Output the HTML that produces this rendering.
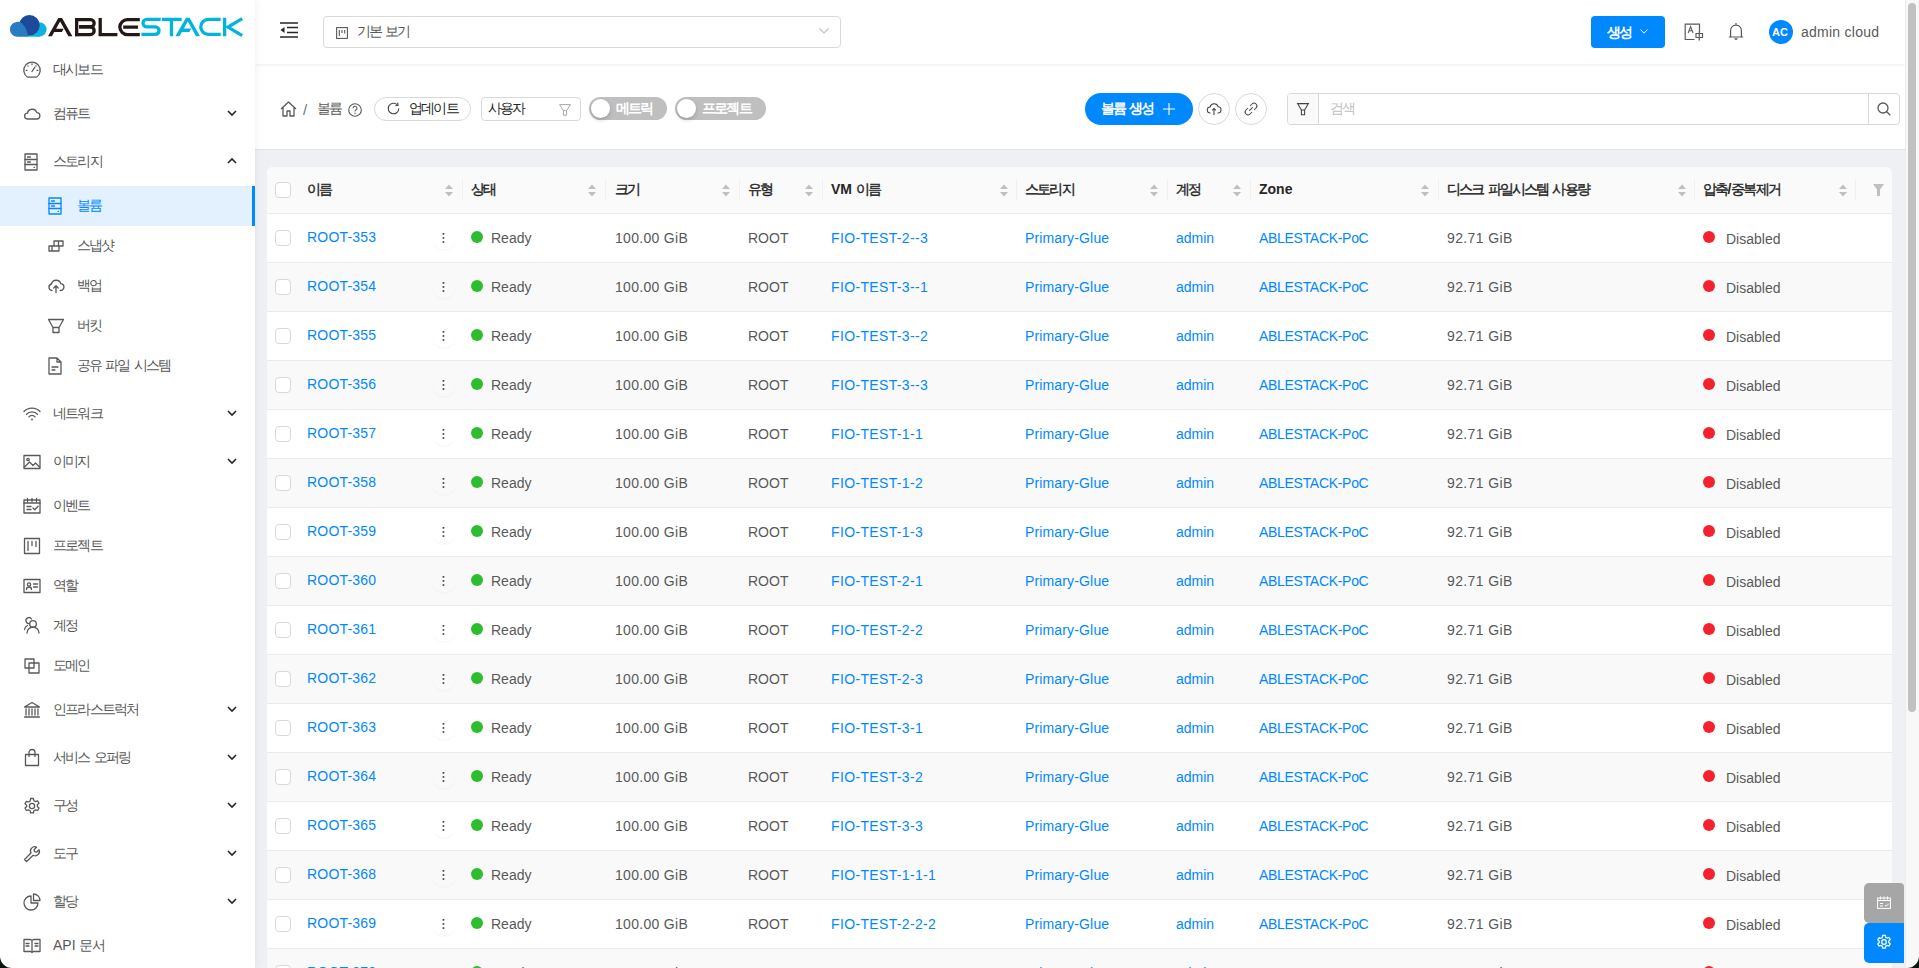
<!DOCTYPE html><html><head><meta charset="utf-8"><title>ABLESTACK</title><style>
*{margin:0;padding:0;box-sizing:border-box}
html,body{width:1919px;height:968px;overflow:hidden;background:#fff;font-family:"Liberation Sans",sans-serif;font-size:14px;color:#595959}
.abs{position:absolute}
.t{position:absolute;white-space:nowrap;line-height:22px;height:22px}
svg{position:absolute;overflow:visible}
.k{letter-spacing:-1.8px}
.hb .k{font-weight:400;-webkit-text-stroke:0.4px currentColor}
</style></head><body>
<div class="abs" style="left:255px;top:150px;width:1650px;height:818px;background:#eef0f4"></div>
<div class="abs" style="left:255px;top:64px;width:1650px;height:86px;background:#fff;border-bottom:1px solid #e3e3e5"></div>
<div class="abs" style="left:255px;top:0;width:1650px;height:64px;background:#fff;box-shadow:0 1px 3px rgba(0,21,41,.07)"></div>
<div class="abs" style="left:0;top:0;width:255px;height:968px;background:#fff;box-shadow:2px 0 8px rgba(0,21,41,.05)"></div>
<div class="abs" style="left:0;top:186px;width:255px;height:40px;background:#e3f1fe"></div>
<div class="abs" style="left:252px;top:186px;width:3px;height:40px;background:#0088ff"></div>
<svg style="left:23px;top:61px" width="18" height="18" viewBox="0 0 18 18"><path d="M4.6 16.2 A8.2 8.2 0 1 1 13.4 16.2 Z" stroke="#595959" stroke-width="1.3" fill="none" stroke-linecap="round" stroke-linejoin="round"/><path d="M9 10.5 L11.8 6.3" stroke="#595959" stroke-width="1.3" fill="none" stroke-linecap="round" stroke-linejoin="round" stroke-width="1.6"/><path d="M3.2 9.3h.8 M5 5h.1 M9 2.9v.8 M13 5h.1 M14.8 9.3h-.8" stroke="#595959" stroke-width="1.3" fill="none" stroke-linecap="round" stroke-linejoin="round"/></svg>
<div class="t" style="left:53px;top:58px;color:#595959;font-size:14px;font-weight:400;"><span class="k">대시보드</span></div>
<svg style="left:23px;top:105px" width="18" height="18" viewBox="0 0 18 18"><path d="M4.5 14 h9 a3.2 3.2 0 0 0 0.3-6.4 a4.8 4.8 0 0 0 -9.3 0.6 a2.9 2.9 0 0 0 0 5.8z" stroke="#595959" stroke-width="1.3" fill="none" stroke-linecap="round" stroke-linejoin="round"/></svg>
<div class="t" style="left:53px;top:102px;color:#595959;font-size:14px;font-weight:400;"><span class="k">컴퓨트</span></div>
<svg style="left:227px;top:110px" width="10" height="6" viewBox="0 0 10 6"><path d="M1 1 L5 5 L9 1" stroke="#262626" stroke-width="1.6" fill="none"/></svg>
<svg style="left:23px;top:153px" width="16" height="18" viewBox="0 0 16 18"><rect x="2" y="1" width="12" height="16" stroke="#595959" stroke-width="1.3" fill="none" stroke-linecap="round" stroke-linejoin="round"/><path d="M2 6.5h12 M2 11.5h12 M4.5 4h3 M4.5 9h3 M11 14.3h.5" stroke="#595959" stroke-width="1.3" fill="none" stroke-linecap="round" stroke-linejoin="round"/></svg>
<div class="t" style="left:53px;top:150px;color:#595959;font-size:14px;font-weight:400;"><span class="k">스토리지</span></div>
<svg style="left:227px;top:158px" width="10" height="6" viewBox="0 0 10 6"><path d="M1 5 L5 1 L9 5" stroke="#262626" stroke-width="1.6" fill="none"/></svg>
<svg style="left:47px;top:197px" width="16" height="18" viewBox="0 0 16 18"><rect x="2" y="1" width="12" height="16" stroke="#0088ff" stroke-width="1.3" fill="none" stroke-linecap="round" stroke-linejoin="round"/><path d="M2 6.5h12 M2 11.5h12 M4.5 4h3 M4.5 9h3 M11 14.3h.5" stroke="#0088ff" stroke-width="1.3" fill="none" stroke-linecap="round" stroke-linejoin="round"/></svg>
<div class="t" style="left:77px;top:194px;color:#0088ff;font-size:14px;font-weight:400;"><span class="k">볼륨</span></div>
<svg style="left:47px;top:237px" width="18" height="18" viewBox="0 0 18 18"><path d="M2 9h10v5H2z M7 9V4h9v5h-4 M5 9v5 M11.5 4v5" stroke="#595959" stroke-width="1.3" fill="none" stroke-linecap="round" stroke-linejoin="round"/></svg>
<div class="t" style="left:77px;top:234px;color:#595959;font-size:14px;font-weight:400;"><span class="k">스냅샷</span></div>
<svg style="left:47px;top:277px" width="18" height="18" viewBox="0 0 18 18"><path d="M5 13.5 a3.3 3.3 0 0 1 -0.5-6.5 a4.8 4.8 0 0 1 9.3-0.3 a3.4 3.4 0 0 1 -0.6 6.8" stroke="#595959" stroke-width="1.3" fill="none" stroke-linecap="round" stroke-linejoin="round"/><path d="M9 15.5 v-6.5 M6.8 11 L9 8.8 L11.2 11" stroke="#595959" stroke-width="1.3" fill="none" stroke-linecap="round" stroke-linejoin="round"/></svg>
<div class="t" style="left:77px;top:274px;color:#595959;font-size:14px;font-weight:400;"><span class="k">백업</span></div>
<svg style="left:47px;top:317px" width="18" height="18" viewBox="0 0 18 18"><path d="M1.5 2.5h15 l-4.5 8v5h-6v-5z M6 10.5h6" stroke="#595959" stroke-width="1.3" fill="none" stroke-linecap="round" stroke-linejoin="round"/></svg>
<div class="t" style="left:77px;top:314px;color:#595959;font-size:14px;font-weight:400;"><span class="k">버킷</span></div>
<svg style="left:47px;top:357px" width="16" height="18" viewBox="0 0 16 18"><path d="M2 1h8l4 4v12H2z M10 1v4h4 M5 10h6 M5 13h3" stroke="#595959" stroke-width="1.3" fill="none" stroke-linecap="round" stroke-linejoin="round"/></svg>
<div class="t" style="left:77px;top:354px;color:#595959;font-size:14px;font-weight:400;"><span class="k">공유</span> <span class="k">파일</span> <span class="k">시스템</span></div>
<svg style="left:23px;top:405px" width="18" height="18" viewBox="0 0 18 18"><path d="M1 6.5 a11 11 0 0 1 16 0 M3.5 9.2 a7.5 7.5 0 0 1 11 0 M6 11.8 a4 4 0 0 1 6 0" stroke="#595959" stroke-width="1.3" fill="none" stroke-linecap="round" stroke-linejoin="round"/><circle cx="9" cy="14.5" r="0.9" fill="#595959"/></svg>
<div class="t" style="left:53px;top:402px;color:#595959;font-size:14px;font-weight:400;"><span class="k">네트워크</span></div>
<svg style="left:227px;top:410px" width="10" height="6" viewBox="0 0 10 6"><path d="M1 1 L5 5 L9 1" stroke="#262626" stroke-width="1.6" fill="none"/></svg>
<svg style="left:23px;top:453px" width="18" height="18" viewBox="0 0 18 18"><rect x="1" y="2.5" width="16" height="13" stroke="#595959" stroke-width="1.3" fill="none" stroke-linecap="round" stroke-linejoin="round"/><path d="M1.5 14 L6.5 9 L10 12.5 L12.5 10 L16.5 14" stroke="#595959" stroke-width="1.3" fill="none" stroke-linecap="round" stroke-linejoin="round"/><circle cx="5" cy="6.5" r="1.2" stroke="#595959" stroke-width="1.3" fill="none" stroke-linecap="round" stroke-linejoin="round"/></svg>
<div class="t" style="left:53px;top:450px;color:#595959;font-size:14px;font-weight:400;"><span class="k">이미지</span></div>
<svg style="left:227px;top:458px" width="10" height="6" viewBox="0 0 10 6"><path d="M1 1 L5 5 L9 1" stroke="#262626" stroke-width="1.6" fill="none"/></svg>
<svg style="left:23px;top:497px" width="18" height="18" viewBox="0 0 18 18"><rect x="1" y="3" width="16" height="13" stroke="#595959" stroke-width="1.3" fill="none" stroke-linecap="round" stroke-linejoin="round"/><path d="M4.5 1.5v3 M9 1.5v3 M13.5 1.5v3 M1 6h16 M4 9.5h4 M4 12.5h4 M10 11l1.8 1.8 3.2-3.5" stroke="#595959" stroke-width="1.3" fill="none" stroke-linecap="round" stroke-linejoin="round"/></svg>
<div class="t" style="left:53px;top:494px;color:#595959;font-size:14px;font-weight:400;"><span class="k">이벤트</span></div>
<svg style="left:23px;top:537px" width="18" height="18" viewBox="0 0 18 18"><rect x="1.5" y="1.5" width="15" height="15" stroke="#595959" stroke-width="1.3" fill="none" stroke-linecap="round" stroke-linejoin="round"/><path d="M5 4.5v9 M9 4.5v4 M13 4.5v5" stroke="#595959" stroke-width="1.3" fill="none" stroke-linecap="round" stroke-linejoin="round"/></svg>
<div class="t" style="left:53px;top:534px;color:#595959;font-size:14px;font-weight:400;"><span class="k">프로젝트</span></div>
<svg style="left:23px;top:577px" width="18" height="18" viewBox="0 0 18 18"><rect x="1" y="2.5" width="16" height="13" stroke="#595959" stroke-width="1.3" fill="none" stroke-linecap="round" stroke-linejoin="round"/><circle cx="6" cy="7.5" r="1.6" stroke="#595959" stroke-width="1.3" fill="none" stroke-linecap="round" stroke-linejoin="round"/><path d="M3.5 12.5 a2.5 2.5 0 0 1 5 0 M10.5 7h4 M10.5 10h4" stroke="#595959" stroke-width="1.3" fill="none" stroke-linecap="round" stroke-linejoin="round"/></svg>
<div class="t" style="left:53px;top:574px;color:#595959;font-size:14px;font-weight:400;"><span class="k">역할</span></div>
<svg style="left:23px;top:617px" width="18" height="18" viewBox="0 0 18 18"><circle cx="10" cy="7" r="3.3" stroke="#595959" stroke-width="1.3" fill="none" stroke-linecap="round" stroke-linejoin="round"/><path d="M4 16 a6 6 0 0 1 12 0 M6.5 6.5 a3 3 0 1 1 2-4.5 M1.5 12.5 a5.5 5.5 0 0 1 3-4" stroke="#595959" stroke-width="1.3" fill="none" stroke-linecap="round" stroke-linejoin="round"/></svg>
<div class="t" style="left:53px;top:614px;color:#595959;font-size:14px;font-weight:400;"><span class="k">계정</span></div>
<svg style="left:23px;top:657px" width="18" height="18" viewBox="0 0 18 18"><rect x="2" y="2" width="9" height="9" stroke="#595959" stroke-width="1.3" fill="none" stroke-linecap="round" stroke-linejoin="round"/><rect x="6" y="6" width="10" height="10" stroke="#595959" stroke-width="1.3" fill="none" stroke-linecap="round" stroke-linejoin="round"/></svg>
<div class="t" style="left:53px;top:654px;color:#595959;font-size:14px;font-weight:400;"><span class="k">도메인</span></div>
<svg style="left:23px;top:701px" width="18" height="18" viewBox="0 0 18 18"><path d="M1.5 6 L9 1.5 L16.5 6 Z M3 8v6 M6 8v6 M9 8v6 M12 8v6 M15 8v6 M1.5 16h15" stroke="#595959" stroke-width="1.3" fill="none" stroke-linecap="round" stroke-linejoin="round"/></svg>
<div class="t" style="left:53px;top:698px;color:#595959;font-size:14px;font-weight:400;"><span class="k">인프라스트럭처</span></div>
<svg style="left:227px;top:706px" width="10" height="6" viewBox="0 0 10 6"><path d="M1 1 L5 5 L9 1" stroke="#262626" stroke-width="1.6" fill="none"/></svg>
<svg style="left:23px;top:749px" width="18" height="18" viewBox="0 0 18 18"><path d="M2.5 5.5h13v11h-13z M6 7.5V3.5 a3 3 0 0 1 6 0v4" stroke="#595959" stroke-width="1.3" fill="none" stroke-linecap="round" stroke-linejoin="round"/></svg>
<div class="t" style="left:53px;top:746px;color:#595959;font-size:14px;font-weight:400;"><span class="k">서비스</span> <span class="k">오퍼링</span></div>
<svg style="left:227px;top:754px" width="10" height="6" viewBox="0 0 10 6"><path d="M1 1 L5 5 L9 1" stroke="#262626" stroke-width="1.6" fill="none"/></svg>
<svg style="left:23px;top:797px" width="18" height="18" viewBox="0 0 18 18"><path d="M7.6 1.5h2.8l.5 2.2 1.6.9 2.1-.7 1.4 2.4-1.7 1.5v1.8l1.7 1.5-1.4 2.4-2.1-.7-1.6.9-.5 2.2H7.6l-.5-2.2-1.6-.9-2.1.7-1.4-2.4 1.7-1.5V8.2L2 6.7l1.4-2.4 2.1.7 1.6-.9z" stroke="#595959" stroke-width="1.3" fill="none" stroke-linecap="round" stroke-linejoin="round"/><circle cx="9" cy="9" r="2.6" stroke="#595959" stroke-width="1.3" fill="none" stroke-linecap="round" stroke-linejoin="round"/></svg>
<div class="t" style="left:53px;top:794px;color:#595959;font-size:14px;font-weight:400;"><span class="k">구성</span></div>
<svg style="left:227px;top:802px" width="10" height="6" viewBox="0 0 10 6"><path d="M1 1 L5 5 L9 1" stroke="#262626" stroke-width="1.6" fill="none"/></svg>
<svg style="left:23px;top:845px" width="18" height="18" viewBox="0 0 18 18"><path d="M1.5 14.5 L8 8 a4.2 4.2 0 0 1 5.5-5.8 L11 4.7 l.5 2 2 .5 2.5-2.5 a4.2 4.2 0 0 1 -5.8 5.5 L3.5 16.5z" stroke="#595959" stroke-width="1.3" fill="none" stroke-linecap="round" stroke-linejoin="round"/></svg>
<div class="t" style="left:53px;top:842px;color:#595959;font-size:14px;font-weight:400;"><span class="k">도구</span></div>
<svg style="left:227px;top:850px" width="10" height="6" viewBox="0 0 10 6"><path d="M1 1 L5 5 L9 1" stroke="#262626" stroke-width="1.6" fill="none"/></svg>
<svg style="left:23px;top:893px" width="18" height="18" viewBox="0 0 18 18"><path d="M8 3 a7 7 0 1 0 7 7 H8z M10.5 1 v6.5 H17 a6.5 6.5 0 0 0 -6.5-6.5z" stroke="#595959" stroke-width="1.3" fill="none" stroke-linecap="round" stroke-linejoin="round"/></svg>
<div class="t" style="left:53px;top:890px;color:#595959;font-size:14px;font-weight:400;"><span class="k">할당</span></div>
<svg style="left:227px;top:898px" width="10" height="6" viewBox="0 0 10 6"><path d="M1 1 L5 5 L9 1" stroke="#262626" stroke-width="1.6" fill="none"/></svg>
<svg style="left:23px;top:937px" width="18" height="18" viewBox="0 0 18 18"><path d="M1 2.5h6.5 l1.5 1 1.5-1H17v12h-6.5l-1.5 1-1.5-1H1z M9 3.5v12 M3 6.5h3 M3 9h3 M12 6.5h3 M12 9h3" stroke="#595959" stroke-width="1.3" fill="none" stroke-linecap="round" stroke-linejoin="round"/></svg>
<div class="t" style="left:53px;top:934px;color:#595959;font-size:14px;font-weight:400;">API <span class="k">문서</span></div>
<svg style="left:0;top:0" width="250" height="45" viewBox="0 0 250 45">
<rect x="27" y="29" width="12.5" height="7.7" fill="#0db3e1"/>
<circle cx="39.4" cy="29.5" r="7.2" fill="#0db3e1"/>
<circle cx="29.4" cy="25.3" r="10.3" fill="#1d4a9a"/>
<path d="M17.2 36.7 A7.35 7.35 0 0 1 14.6 22.5 C16.5 21.8 18.5 21.5 19.6 21.7 C24.2 23.8 27 30 28.2 36.7 Z" fill="#2a7cc0"/>
<g fill="#231815">
<path d="M48 36.2 L58.3 18 L62 18 L72.4 36.2 L68.4 36.2 L60.1 21.6 L51.9 36.2 Z M52.7 28.7 L63.6 28.7 L61.9 32 L50.8 32 Z"/>
</g>
<g stroke="#231815" stroke-width="3.3" fill="none">
<path d="M76.65 18 V36.2"/>
<path d="M75 19.65 H90.6 A3.55 3.55 0 0 1 90.6 26.75 H79.2"/>
<path d="M79.2 26.75 H90.25 A3.9 3.9 0 0 1 90.25 34.55 H75"/>
<path d="M100.2 18 V36.2 M98.5 34.55 H117.4"/>
<path d="M139.8 19.65 H127.3 A7.45 7.45 0 0 0 127.3 34.55 H139.8 M123.2 27.1 H138"/>
</g>
<g stroke="#00b4e0" stroke-width="3.3" fill="none">
<path d="M160.7 19.45 H146.7 A3.675 3.675 0 0 0 146.7 26.8 H155.3 A3.775 3.775 0 0 1 155.3 34.35 H141.4"/>
<path d="M161.8 19.45 H181.7 M171.45 19.45 V36.2"/>
<path d="M220.7 19.45 H208.2 A7.45 7.45 0 0 0 208.2 34.35 H220.7"/>
<path d="M224.65 17.8 V36.2 M242.2 18.6 L228 27.1 L242.2 35.7"/>
</g>
<g fill="#00b4e0">
<path d="M175.4 36.2 L186 17.8 L189.6 17.8 L200 36.2 L196.1 36.2 L187.8 21.6 L179.4 36.2 Z M180.4 28.6 L191.2 28.6 L189.5 31.9 L178.5 31.9 Z"/>
</g>
</svg>
<svg style="left:280px;top:22px" width="18" height="16" viewBox="0 0 18 16"><path d="M0 1h18 M7 5.5h11 M7 10.5h11 M0 15h18" stroke="#262626" stroke-width="1.6"/><path d="M0.5 8 L4.5 5 V11 Z" fill="#262626"/></svg>
<div class="abs" style="left:323px;top:16px;width:518px;height:32px;border:1px solid #d9d9d9;border-radius:4px;background:#fff"></div>
<svg style="left:336px;top:27px" width="12" height="12" viewBox="0 0 12 12"><rect x="0.6" y="0.6" width="10.8" height="10.8" stroke="#595959" stroke-width="1.1" fill="none"/><path d="M3.3 3v6 M6 3v3 M8.7 3v3.5" stroke="#595959" stroke-width="1.1"/></svg>
<div class="t" style="left:357px;top:20px;color:#595959;font-size:14px;font-weight:400;"><span class="k">기본</span> <span class="k">보기</span></div>
<svg style="left:819px;top:28px" width="10" height="6" viewBox="0 0 10 6"><path d="M0.5 0.5 L5 5 L9.5 0.5" stroke="#bfbfbf" stroke-width="1.1" fill="none"/></svg>
<div class="abs" style="left:1591px;top:16px;width:74px;height:32px;background:#0088ff;border-radius:4px"></div>
<div class="t" style="left:1607px;top:21px;color:#fff;font-size:14px;font-weight:700;"><span class="k">생성</span></div>
<svg style="left:1640px;top:29px" width="8" height="5" viewBox="0 0 8 5"><path d="M0.5 0.5 L4 4.2 L7.5 0.5" stroke="#fff" stroke-width="1" fill="none"/></svg>
<svg style="left:1684px;top:23px" width="20" height="18" viewBox="0 0 20 18"><path d="M10.5 16.5H1.2V1.2h14.3v8" stroke="#595959" stroke-width="1.2" fill="none"/><path d="M4.2 10 L6.6 3.5 L9 10 M5.1 7.8h3" stroke="#595959" stroke-width="1.1" fill="none"/><path d="M12 10.5h6.5v4H12z M15.25 8.5v9" stroke="#595959" stroke-width="1.2" fill="none"/></svg>
<svg style="left:1728px;top:22px" width="16" height="19" viewBox="0 0 16 19"><path d="M2.6 15 V8.5 a5.4 5.4 0 0 1 10.8 0 V15 M0.8 15h14.4 M8 1v2" stroke="#595959" stroke-width="1.2" fill="none"/><path d="M6.3 16.3 a1.7 1.7 0 0 0 3.4 0z" fill="#595959"/></svg>
<div class="abs" style="left:1769px;top:20px;width:24px;height:24px;border-radius:50%;background:#0088ff"></div>
<div class="t" style="left:1772px;top:21px;color:#fff;font-size:11px;font-weight:700;">AC</div>
<div class="t" style="left:1801px;top:21px;color:#595959;font-size:14px;font-weight:400;letter-spacing:0.25px">admin cloud</div>
<svg style="left:280px;top:101px" width="17" height="16" viewBox="0 0 17 16"><path d="M1 8 L8.5 1 L16 8 M3 6.5V15h4v-5h3v5h4V6.5" stroke="#595959" stroke-width="1.3" fill="none" stroke-linejoin="round"/></svg>
<div class="t" style="left:303px;top:99px;color:#737373;font-size:15px;font-weight:400;">/</div>
<div class="t" style="left:317px;top:97px;color:#595959;font-size:14px;font-weight:400;"><span class="k">볼륨</span></div>
<svg style="left:348px;top:103px" width="14" height="14" viewBox="0 0 14 14"><circle cx="7" cy="7" r="6.3" stroke="#595959" stroke-width="1.1" fill="none"/><path d="M5 5.3 a2 2 0 1 1 2.8 1.8 c-.6.3-.8.6-.8 1.3" stroke="#595959" stroke-width="1.1" fill="none"/><circle cx="7" cy="10.3" r=".7" fill="#595959"/></svg>
<div class="abs" style="left:374px;top:97px;width:97px;height:24px;border:1px solid #d9d9d9;border-radius:12px;background:#fff"></div>
<svg style="left:387px;top:102px" width="13" height="13" viewBox="0 0 13 13"><path d="M11.8 6.5 a5.3 5.3 0 1 1 -1.6-3.8" stroke="#434343" stroke-width="1.1" fill="none"/><path d="M10.6 0.6 l.5 2.8 -2.8.4" stroke="#434343" stroke-width="1.1" fill="none"/></svg>
<div class="t" style="left:409px;top:97px;color:#262626;font-size:14px;font-weight:400;"><span class="k">업데이트</span></div>
<div class="abs" style="left:481px;top:97px;width:100px;height:24px;border:1px solid #d9d9d9;border-radius:4px;background:#fff"></div>
<div class="t" style="left:488px;top:97px;color:#262626;font-size:14px;font-weight:400;"><span class="k">사용자</span></div>
<svg style="left:559px;top:104px" width="12" height="12" viewBox="0 0 12 12"><path d="M0.6 0.6h10.8 L7.6 6.6 H4.4z M4.4 6.6v4.6h3.2V6.6" stroke="#a6a6a6" stroke-width="1" fill="none"/></svg>
<div class="abs" style="left:589px;top:97px;width:78px;height:23px;border-radius:12px;background:#bfbfbf"></div>
<div class="abs" style="left:591px;top:99px;width:19px;height:19px;border-radius:50%;background:#fff;box-shadow:0 2px 4px rgba(0,35,11,.2)"></div>
<div class="t" style="left:616px;top:97px;color:#fff;font-size:14px;font-weight:700;"><span class="k">메트릭</span></div>
<div class="abs" style="left:675px;top:97px;width:91px;height:23px;border-radius:12px;background:#bfbfbf"></div>
<div class="abs" style="left:677px;top:99px;width:19px;height:19px;border-radius:50%;background:#fff;box-shadow:0 2px 4px rgba(0,35,11,.2)"></div>
<div class="t" style="left:702px;top:97px;color:#fff;font-size:14px;font-weight:700;"><span class="k">프로젝트</span></div>
<div class="abs" style="left:1085px;top:93px;width:108px;height:32px;border-radius:16px;background:#0088ff"></div>
<div class="t" style="left:1101px;top:97px;color:#fff;font-size:14px;font-weight:700;"><span class="k">볼륨</span> <span class="k">생성</span></div>
<svg style="left:1163px;top:103px" width="12" height="12" viewBox="0 0 12 12"><path d="M6 0v12 M0 6h12" stroke="#fff" stroke-width="1.1"/></svg>
<div class="abs" style="left:1198px;top:93px;width:32px;height:32px;border-radius:50%;border:1px solid #d9d9d9;background:#fff"></div>
<svg style="left:1206px;top:102px" width="16" height="14" viewBox="0 0 16 14"><path d="M4.5 11 a3 3 0 0 1 -.4-6 a4.2 4.2 0 0 1 8.1-.2 a3 3 0 0 1 -.6 6.2" stroke="#434343" stroke-width="1.05" fill="none"/><path d="M8 13V6.5 M6.2 8.3 L8 6.5 L9.8 8.3" stroke="#434343" stroke-width="1.05" fill="none"/></svg>
<div class="abs" style="left:1235px;top:93px;width:32px;height:32px;border-radius:50%;border:1px solid #d9d9d9;background:#fff"></div>
<svg style="left:1244px;top:102px" width="14" height="14" viewBox="0 0 14 14"><path d="M6 4 L8 2 a2.8 2.8 0 0 1 4 4 L10 8 M8 10 L6 12 a2.8 2.8 0 0 1 -4-4 L4 6 M5.3 8.7 L8.7 5.3" stroke="#434343" stroke-width="1.05" fill="none"/></svg>
<div class="abs" style="left:1287px;top:93px;width:613px;height:32px;border:1px solid #d9d9d9;border-radius:4px;background:#fff"></div>
<div class="abs" style="left:1288px;top:94px;width:31px;height:30px;background:#fafafa;border-right:1px solid #d9d9d9;border-radius:3px 0 0 3px"></div>
<svg style="left:1297px;top:103px" width="12" height="13" viewBox="0 0 12 13"><path d="M0.6 0.6h10.8 L7.6 7 H4.4z M4.4 7v4.8h3.2V7" stroke="#434343" stroke-width="1.05" fill="none"/></svg>
<div class="t" style="left:1330px;top:97px;color:#bfbfbf;font-size:14px;font-weight:400;"><span class="k">검색</span></div>
<div class="abs" style="left:1868px;top:94px;width:1px;height:30px;background:#d9d9d9"></div>
<svg style="left:1877px;top:102px" width="14" height="14" viewBox="0 0 14 14"><circle cx="6" cy="6" r="5" stroke="#595959" stroke-width="1.3" fill="none"/><path d="M9.7 9.7 L13.3 13.3" stroke="#595959" stroke-width="1.3"/></svg>
<div class="abs" style="left:267px;top:167px;width:1625px;height:801px;background:#fff;border-radius:6px 6px 0 0"></div>
<div class="abs" style="left:267px;top:167px;width:1625px;height:47px;background:#fafafa;border-bottom:1px solid #ebebeb;border-radius:6px 6px 0 0"></div>
<div class="abs" style="left:275px;top:182px;width:16px;height:16px;border:1px solid #d9d9d9;border-radius:4px;background:#fff"></div>
<div class="t hb" style="left:307px;top:178px;color:#262626;font-size:14px;font-weight:700;"><span class="k">이름</span></div>
<svg style="left:445px;top:184px" width="8" height="13" viewBox="0 0 8 13"><path d="M0 5 L4 0.5 L8 5z M0 8 L4 12.5 L8 8z" fill="#bfbfbf"/></svg>
<div class="abs" style="left:462px;top:179px;width:1px;height:22px;background:#f0f0f0"></div>
<div class="t hb" style="left:471px;top:178px;color:#262626;font-size:14px;font-weight:700;"><span class="k">상태</span></div>
<svg style="left:588px;top:184px" width="8" height="13" viewBox="0 0 8 13"><path d="M0 5 L4 0.5 L8 5z M0 8 L4 12.5 L8 8z" fill="#bfbfbf"/></svg>
<div class="abs" style="left:605px;top:179px;width:1px;height:22px;background:#f0f0f0"></div>
<div class="t hb" style="left:615px;top:178px;color:#262626;font-size:14px;font-weight:700;"><span class="k">크기</span></div>
<svg style="left:722px;top:184px" width="8" height="13" viewBox="0 0 8 13"><path d="M0 5 L4 0.5 L8 5z M0 8 L4 12.5 L8 8z" fill="#bfbfbf"/></svg>
<div class="abs" style="left:739px;top:179px;width:1px;height:22px;background:#f0f0f0"></div>
<div class="t hb" style="left:748px;top:178px;color:#262626;font-size:14px;font-weight:700;"><span class="k">유형</span></div>
<svg style="left:805px;top:184px" width="8" height="13" viewBox="0 0 8 13"><path d="M0 5 L4 0.5 L8 5z M0 8 L4 12.5 L8 8z" fill="#bfbfbf"/></svg>
<div class="abs" style="left:822px;top:179px;width:1px;height:22px;background:#f0f0f0"></div>
<div class="t hb" style="left:831px;top:178px;color:#262626;font-size:14px;font-weight:700;">VM <span class="k">이름</span></div>
<svg style="left:1000px;top:184px" width="8" height="13" viewBox="0 0 8 13"><path d="M0 5 L4 0.5 L8 5z M0 8 L4 12.5 L8 8z" fill="#bfbfbf"/></svg>
<div class="abs" style="left:1016px;top:179px;width:1px;height:22px;background:#f0f0f0"></div>
<div class="t hb" style="left:1025px;top:178px;color:#262626;font-size:14px;font-weight:700;"><span class="k">스토리지</span></div>
<svg style="left:1150px;top:184px" width="8" height="13" viewBox="0 0 8 13"><path d="M0 5 L4 0.5 L8 5z M0 8 L4 12.5 L8 8z" fill="#bfbfbf"/></svg>
<div class="abs" style="left:1167px;top:179px;width:1px;height:22px;background:#f0f0f0"></div>
<div class="t hb" style="left:1176px;top:178px;color:#262626;font-size:14px;font-weight:700;"><span class="k">계정</span></div>
<svg style="left:1233px;top:184px" width="8" height="13" viewBox="0 0 8 13"><path d="M0 5 L4 0.5 L8 5z M0 8 L4 12.5 L8 8z" fill="#bfbfbf"/></svg>
<div class="abs" style="left:1250px;top:179px;width:1px;height:22px;background:#f0f0f0"></div>
<div class="t hb" style="left:1259px;top:178px;color:#262626;font-size:14px;font-weight:700;">Zone</div>
<svg style="left:1421px;top:184px" width="8" height="13" viewBox="0 0 8 13"><path d="M0 5 L4 0.5 L8 5z M0 8 L4 12.5 L8 8z" fill="#bfbfbf"/></svg>
<div class="abs" style="left:1438px;top:179px;width:1px;height:22px;background:#f0f0f0"></div>
<div class="t hb" style="left:1447px;top:178px;color:#262626;font-size:14px;font-weight:700;"><span class="k">디스크</span> <span class="k">파일시스템</span> <span class="k">사용량</span></div>
<svg style="left:1678px;top:184px" width="8" height="13" viewBox="0 0 8 13"><path d="M0 5 L4 0.5 L8 5z M0 8 L4 12.5 L8 8z" fill="#bfbfbf"/></svg>
<div class="abs" style="left:1694px;top:179px;width:1px;height:22px;background:#f0f0f0"></div>
<div class="t hb" style="left:1703px;top:178px;color:#262626;font-size:14px;font-weight:700;"><span class="k">압축</span>/<span class="k">중복제거</span></div>
<svg style="left:1839px;top:184px" width="8" height="13" viewBox="0 0 8 13"><path d="M0 5 L4 0.5 L8 5z M0 8 L4 12.5 L8 8z" fill="#bfbfbf"/></svg>
<div class="abs" style="left:1855px;top:179px;width:1px;height:22px;background:#f0f0f0"></div>
<svg style="left:1873px;top:184px" width="11" height="12" viewBox="0 0 11 12"><path d="M0 0h11 L7 5.5 V12 H4 V5.5z" fill="#bfbfbf"/></svg>
<div class="abs" style="left:267px;top:214px;width:1625px;height:49px;background:#fff;border-bottom:1px solid #ebebeb"></div>
<div class="abs" style="left:275px;top:230px;width:16px;height:16px;border:1px solid #d9d9d9;border-radius:4px;background:#fff"></div>
<div class="t" style="left:307px;top:226px;color:#0088ff;font-size:14px;font-weight:400;letter-spacing:0.2px">ROOT-353</div>
<div class="abs" style="left:432px;top:225px;width:24px;height:24px;border-radius:50%;box-shadow:0 2px 0 rgba(0,0,0,.018)"></div>
<svg style="left:442px;top:233px" width="3" height="10" viewBox="0 0 3 10"><rect x="0.6" y="0" width="1.7" height="1.7" fill="#434343"/><rect x="0.6" y="4.1" width="1.7" height="1.7" fill="#434343"/><rect x="0.6" y="8.2" width="1.7" height="1.7" fill="#434343"/></svg>
<div class="abs" style="left:471px;top:231px;width:12px;height:12px;border-radius:50%;background:#2ebd2e"></div>
<div class="t" style="left:491px;top:227px;color:#595959;font-size:14px;font-weight:400;">Ready</div>
<div class="t" style="left:615px;top:227px;color:#595959;font-size:14px;font-weight:400;letter-spacing:0.3px">100.00 GiB</div>
<div class="t" style="left:748px;top:227px;color:#595959;font-size:14px;font-weight:400;">ROOT</div>
<div class="t" style="left:831px;top:227px;color:#0088ff;font-size:14px;font-weight:400;letter-spacing:0.35px">FIO-TEST-2--3</div>
<div class="t" style="left:1025px;top:227px;color:#0088ff;font-size:14px;font-weight:400;letter-spacing:0.15px">Primary-Glue</div>
<div class="t" style="left:1176px;top:227px;color:#0088ff;font-size:14px;font-weight:400;">admin</div>
<div class="t" style="left:1259px;top:227px;color:#0088ff;font-size:14px;font-weight:400;letter-spacing:-0.3px">ABLESTACK-PoC</div>
<div class="t" style="left:1447px;top:227px;color:#595959;font-size:14px;font-weight:400;letter-spacing:0.37px">92.71 GiB</div>
<div class="abs" style="left:1703px;top:231px;width:12px;height:12px;border-radius:50%;background:#f5222d"></div>
<div class="t" style="left:1726px;top:228px;color:#595959;font-size:14px;font-weight:400;">Disabled</div>
<div class="abs" style="left:267px;top:263px;width:1625px;height:49px;background:#f9f9f9;border-bottom:1px solid #ebebeb"></div>
<div class="abs" style="left:275px;top:279px;width:16px;height:16px;border:1px solid #d9d9d9;border-radius:4px;background:#fff"></div>
<div class="t" style="left:307px;top:275px;color:#0088ff;font-size:14px;font-weight:400;letter-spacing:0.2px">ROOT-354</div>
<div class="abs" style="left:432px;top:274px;width:24px;height:24px;border-radius:50%;box-shadow:0 2px 0 rgba(0,0,0,.018)"></div>
<svg style="left:442px;top:282px" width="3" height="10" viewBox="0 0 3 10"><rect x="0.6" y="0" width="1.7" height="1.7" fill="#434343"/><rect x="0.6" y="4.1" width="1.7" height="1.7" fill="#434343"/><rect x="0.6" y="8.2" width="1.7" height="1.7" fill="#434343"/></svg>
<div class="abs" style="left:471px;top:280px;width:12px;height:12px;border-radius:50%;background:#2ebd2e"></div>
<div class="t" style="left:491px;top:276px;color:#595959;font-size:14px;font-weight:400;">Ready</div>
<div class="t" style="left:615px;top:276px;color:#595959;font-size:14px;font-weight:400;letter-spacing:0.3px">100.00 GiB</div>
<div class="t" style="left:748px;top:276px;color:#595959;font-size:14px;font-weight:400;">ROOT</div>
<div class="t" style="left:831px;top:276px;color:#0088ff;font-size:14px;font-weight:400;letter-spacing:0.35px">FIO-TEST-3--1</div>
<div class="t" style="left:1025px;top:276px;color:#0088ff;font-size:14px;font-weight:400;letter-spacing:0.15px">Primary-Glue</div>
<div class="t" style="left:1176px;top:276px;color:#0088ff;font-size:14px;font-weight:400;">admin</div>
<div class="t" style="left:1259px;top:276px;color:#0088ff;font-size:14px;font-weight:400;letter-spacing:-0.3px">ABLESTACK-PoC</div>
<div class="t" style="left:1447px;top:276px;color:#595959;font-size:14px;font-weight:400;letter-spacing:0.37px">92.71 GiB</div>
<div class="abs" style="left:1703px;top:280px;width:12px;height:12px;border-radius:50%;background:#f5222d"></div>
<div class="t" style="left:1726px;top:277px;color:#595959;font-size:14px;font-weight:400;">Disabled</div>
<div class="abs" style="left:267px;top:312px;width:1625px;height:49px;background:#fff;border-bottom:1px solid #ebebeb"></div>
<div class="abs" style="left:275px;top:328px;width:16px;height:16px;border:1px solid #d9d9d9;border-radius:4px;background:#fff"></div>
<div class="t" style="left:307px;top:324px;color:#0088ff;font-size:14px;font-weight:400;letter-spacing:0.2px">ROOT-355</div>
<div class="abs" style="left:432px;top:323px;width:24px;height:24px;border-radius:50%;box-shadow:0 2px 0 rgba(0,0,0,.018)"></div>
<svg style="left:442px;top:331px" width="3" height="10" viewBox="0 0 3 10"><rect x="0.6" y="0" width="1.7" height="1.7" fill="#434343"/><rect x="0.6" y="4.1" width="1.7" height="1.7" fill="#434343"/><rect x="0.6" y="8.2" width="1.7" height="1.7" fill="#434343"/></svg>
<div class="abs" style="left:471px;top:329px;width:12px;height:12px;border-radius:50%;background:#2ebd2e"></div>
<div class="t" style="left:491px;top:325px;color:#595959;font-size:14px;font-weight:400;">Ready</div>
<div class="t" style="left:615px;top:325px;color:#595959;font-size:14px;font-weight:400;letter-spacing:0.3px">100.00 GiB</div>
<div class="t" style="left:748px;top:325px;color:#595959;font-size:14px;font-weight:400;">ROOT</div>
<div class="t" style="left:831px;top:325px;color:#0088ff;font-size:14px;font-weight:400;letter-spacing:0.35px">FIO-TEST-3--2</div>
<div class="t" style="left:1025px;top:325px;color:#0088ff;font-size:14px;font-weight:400;letter-spacing:0.15px">Primary-Glue</div>
<div class="t" style="left:1176px;top:325px;color:#0088ff;font-size:14px;font-weight:400;">admin</div>
<div class="t" style="left:1259px;top:325px;color:#0088ff;font-size:14px;font-weight:400;letter-spacing:-0.3px">ABLESTACK-PoC</div>
<div class="t" style="left:1447px;top:325px;color:#595959;font-size:14px;font-weight:400;letter-spacing:0.37px">92.71 GiB</div>
<div class="abs" style="left:1703px;top:329px;width:12px;height:12px;border-radius:50%;background:#f5222d"></div>
<div class="t" style="left:1726px;top:326px;color:#595959;font-size:14px;font-weight:400;">Disabled</div>
<div class="abs" style="left:267px;top:361px;width:1625px;height:49px;background:#f9f9f9;border-bottom:1px solid #ebebeb"></div>
<div class="abs" style="left:275px;top:377px;width:16px;height:16px;border:1px solid #d9d9d9;border-radius:4px;background:#fff"></div>
<div class="t" style="left:307px;top:373px;color:#0088ff;font-size:14px;font-weight:400;letter-spacing:0.2px">ROOT-356</div>
<div class="abs" style="left:432px;top:372px;width:24px;height:24px;border-radius:50%;box-shadow:0 2px 0 rgba(0,0,0,.018)"></div>
<svg style="left:442px;top:380px" width="3" height="10" viewBox="0 0 3 10"><rect x="0.6" y="0" width="1.7" height="1.7" fill="#434343"/><rect x="0.6" y="4.1" width="1.7" height="1.7" fill="#434343"/><rect x="0.6" y="8.2" width="1.7" height="1.7" fill="#434343"/></svg>
<div class="abs" style="left:471px;top:378px;width:12px;height:12px;border-radius:50%;background:#2ebd2e"></div>
<div class="t" style="left:491px;top:374px;color:#595959;font-size:14px;font-weight:400;">Ready</div>
<div class="t" style="left:615px;top:374px;color:#595959;font-size:14px;font-weight:400;letter-spacing:0.3px">100.00 GiB</div>
<div class="t" style="left:748px;top:374px;color:#595959;font-size:14px;font-weight:400;">ROOT</div>
<div class="t" style="left:831px;top:374px;color:#0088ff;font-size:14px;font-weight:400;letter-spacing:0.35px">FIO-TEST-3--3</div>
<div class="t" style="left:1025px;top:374px;color:#0088ff;font-size:14px;font-weight:400;letter-spacing:0.15px">Primary-Glue</div>
<div class="t" style="left:1176px;top:374px;color:#0088ff;font-size:14px;font-weight:400;">admin</div>
<div class="t" style="left:1259px;top:374px;color:#0088ff;font-size:14px;font-weight:400;letter-spacing:-0.3px">ABLESTACK-PoC</div>
<div class="t" style="left:1447px;top:374px;color:#595959;font-size:14px;font-weight:400;letter-spacing:0.37px">92.71 GiB</div>
<div class="abs" style="left:1703px;top:378px;width:12px;height:12px;border-radius:50%;background:#f5222d"></div>
<div class="t" style="left:1726px;top:375px;color:#595959;font-size:14px;font-weight:400;">Disabled</div>
<div class="abs" style="left:267px;top:410px;width:1625px;height:49px;background:#fff;border-bottom:1px solid #ebebeb"></div>
<div class="abs" style="left:275px;top:426px;width:16px;height:16px;border:1px solid #d9d9d9;border-radius:4px;background:#fff"></div>
<div class="t" style="left:307px;top:422px;color:#0088ff;font-size:14px;font-weight:400;letter-spacing:0.2px">ROOT-357</div>
<div class="abs" style="left:432px;top:421px;width:24px;height:24px;border-radius:50%;box-shadow:0 2px 0 rgba(0,0,0,.018)"></div>
<svg style="left:442px;top:429px" width="3" height="10" viewBox="0 0 3 10"><rect x="0.6" y="0" width="1.7" height="1.7" fill="#434343"/><rect x="0.6" y="4.1" width="1.7" height="1.7" fill="#434343"/><rect x="0.6" y="8.2" width="1.7" height="1.7" fill="#434343"/></svg>
<div class="abs" style="left:471px;top:427px;width:12px;height:12px;border-radius:50%;background:#2ebd2e"></div>
<div class="t" style="left:491px;top:423px;color:#595959;font-size:14px;font-weight:400;">Ready</div>
<div class="t" style="left:615px;top:423px;color:#595959;font-size:14px;font-weight:400;letter-spacing:0.3px">100.00 GiB</div>
<div class="t" style="left:748px;top:423px;color:#595959;font-size:14px;font-weight:400;">ROOT</div>
<div class="t" style="left:831px;top:423px;color:#0088ff;font-size:14px;font-weight:400;letter-spacing:0.35px">FIO-TEST-1-1</div>
<div class="t" style="left:1025px;top:423px;color:#0088ff;font-size:14px;font-weight:400;letter-spacing:0.15px">Primary-Glue</div>
<div class="t" style="left:1176px;top:423px;color:#0088ff;font-size:14px;font-weight:400;">admin</div>
<div class="t" style="left:1259px;top:423px;color:#0088ff;font-size:14px;font-weight:400;letter-spacing:-0.3px">ABLESTACK-PoC</div>
<div class="t" style="left:1447px;top:423px;color:#595959;font-size:14px;font-weight:400;letter-spacing:0.37px">92.71 GiB</div>
<div class="abs" style="left:1703px;top:427px;width:12px;height:12px;border-radius:50%;background:#f5222d"></div>
<div class="t" style="left:1726px;top:424px;color:#595959;font-size:14px;font-weight:400;">Disabled</div>
<div class="abs" style="left:267px;top:459px;width:1625px;height:49px;background:#f9f9f9;border-bottom:1px solid #ebebeb"></div>
<div class="abs" style="left:275px;top:475px;width:16px;height:16px;border:1px solid #d9d9d9;border-radius:4px;background:#fff"></div>
<div class="t" style="left:307px;top:471px;color:#0088ff;font-size:14px;font-weight:400;letter-spacing:0.2px">ROOT-358</div>
<div class="abs" style="left:432px;top:470px;width:24px;height:24px;border-radius:50%;box-shadow:0 2px 0 rgba(0,0,0,.018)"></div>
<svg style="left:442px;top:478px" width="3" height="10" viewBox="0 0 3 10"><rect x="0.6" y="0" width="1.7" height="1.7" fill="#434343"/><rect x="0.6" y="4.1" width="1.7" height="1.7" fill="#434343"/><rect x="0.6" y="8.2" width="1.7" height="1.7" fill="#434343"/></svg>
<div class="abs" style="left:471px;top:476px;width:12px;height:12px;border-radius:50%;background:#2ebd2e"></div>
<div class="t" style="left:491px;top:472px;color:#595959;font-size:14px;font-weight:400;">Ready</div>
<div class="t" style="left:615px;top:472px;color:#595959;font-size:14px;font-weight:400;letter-spacing:0.3px">100.00 GiB</div>
<div class="t" style="left:748px;top:472px;color:#595959;font-size:14px;font-weight:400;">ROOT</div>
<div class="t" style="left:831px;top:472px;color:#0088ff;font-size:14px;font-weight:400;letter-spacing:0.35px">FIO-TEST-1-2</div>
<div class="t" style="left:1025px;top:472px;color:#0088ff;font-size:14px;font-weight:400;letter-spacing:0.15px">Primary-Glue</div>
<div class="t" style="left:1176px;top:472px;color:#0088ff;font-size:14px;font-weight:400;">admin</div>
<div class="t" style="left:1259px;top:472px;color:#0088ff;font-size:14px;font-weight:400;letter-spacing:-0.3px">ABLESTACK-PoC</div>
<div class="t" style="left:1447px;top:472px;color:#595959;font-size:14px;font-weight:400;letter-spacing:0.37px">92.71 GiB</div>
<div class="abs" style="left:1703px;top:476px;width:12px;height:12px;border-radius:50%;background:#f5222d"></div>
<div class="t" style="left:1726px;top:473px;color:#595959;font-size:14px;font-weight:400;">Disabled</div>
<div class="abs" style="left:267px;top:508px;width:1625px;height:49px;background:#fff;border-bottom:1px solid #ebebeb"></div>
<div class="abs" style="left:275px;top:524px;width:16px;height:16px;border:1px solid #d9d9d9;border-radius:4px;background:#fff"></div>
<div class="t" style="left:307px;top:520px;color:#0088ff;font-size:14px;font-weight:400;letter-spacing:0.2px">ROOT-359</div>
<div class="abs" style="left:432px;top:519px;width:24px;height:24px;border-radius:50%;box-shadow:0 2px 0 rgba(0,0,0,.018)"></div>
<svg style="left:442px;top:527px" width="3" height="10" viewBox="0 0 3 10"><rect x="0.6" y="0" width="1.7" height="1.7" fill="#434343"/><rect x="0.6" y="4.1" width="1.7" height="1.7" fill="#434343"/><rect x="0.6" y="8.2" width="1.7" height="1.7" fill="#434343"/></svg>
<div class="abs" style="left:471px;top:525px;width:12px;height:12px;border-radius:50%;background:#2ebd2e"></div>
<div class="t" style="left:491px;top:521px;color:#595959;font-size:14px;font-weight:400;">Ready</div>
<div class="t" style="left:615px;top:521px;color:#595959;font-size:14px;font-weight:400;letter-spacing:0.3px">100.00 GiB</div>
<div class="t" style="left:748px;top:521px;color:#595959;font-size:14px;font-weight:400;">ROOT</div>
<div class="t" style="left:831px;top:521px;color:#0088ff;font-size:14px;font-weight:400;letter-spacing:0.35px">FIO-TEST-1-3</div>
<div class="t" style="left:1025px;top:521px;color:#0088ff;font-size:14px;font-weight:400;letter-spacing:0.15px">Primary-Glue</div>
<div class="t" style="left:1176px;top:521px;color:#0088ff;font-size:14px;font-weight:400;">admin</div>
<div class="t" style="left:1259px;top:521px;color:#0088ff;font-size:14px;font-weight:400;letter-spacing:-0.3px">ABLESTACK-PoC</div>
<div class="t" style="left:1447px;top:521px;color:#595959;font-size:14px;font-weight:400;letter-spacing:0.37px">92.71 GiB</div>
<div class="abs" style="left:1703px;top:525px;width:12px;height:12px;border-radius:50%;background:#f5222d"></div>
<div class="t" style="left:1726px;top:522px;color:#595959;font-size:14px;font-weight:400;">Disabled</div>
<div class="abs" style="left:267px;top:557px;width:1625px;height:49px;background:#f9f9f9;border-bottom:1px solid #ebebeb"></div>
<div class="abs" style="left:275px;top:573px;width:16px;height:16px;border:1px solid #d9d9d9;border-radius:4px;background:#fff"></div>
<div class="t" style="left:307px;top:569px;color:#0088ff;font-size:14px;font-weight:400;letter-spacing:0.2px">ROOT-360</div>
<div class="abs" style="left:432px;top:568px;width:24px;height:24px;border-radius:50%;box-shadow:0 2px 0 rgba(0,0,0,.018)"></div>
<svg style="left:442px;top:576px" width="3" height="10" viewBox="0 0 3 10"><rect x="0.6" y="0" width="1.7" height="1.7" fill="#434343"/><rect x="0.6" y="4.1" width="1.7" height="1.7" fill="#434343"/><rect x="0.6" y="8.2" width="1.7" height="1.7" fill="#434343"/></svg>
<div class="abs" style="left:471px;top:574px;width:12px;height:12px;border-radius:50%;background:#2ebd2e"></div>
<div class="t" style="left:491px;top:570px;color:#595959;font-size:14px;font-weight:400;">Ready</div>
<div class="t" style="left:615px;top:570px;color:#595959;font-size:14px;font-weight:400;letter-spacing:0.3px">100.00 GiB</div>
<div class="t" style="left:748px;top:570px;color:#595959;font-size:14px;font-weight:400;">ROOT</div>
<div class="t" style="left:831px;top:570px;color:#0088ff;font-size:14px;font-weight:400;letter-spacing:0.35px">FIO-TEST-2-1</div>
<div class="t" style="left:1025px;top:570px;color:#0088ff;font-size:14px;font-weight:400;letter-spacing:0.15px">Primary-Glue</div>
<div class="t" style="left:1176px;top:570px;color:#0088ff;font-size:14px;font-weight:400;">admin</div>
<div class="t" style="left:1259px;top:570px;color:#0088ff;font-size:14px;font-weight:400;letter-spacing:-0.3px">ABLESTACK-PoC</div>
<div class="t" style="left:1447px;top:570px;color:#595959;font-size:14px;font-weight:400;letter-spacing:0.37px">92.71 GiB</div>
<div class="abs" style="left:1703px;top:574px;width:12px;height:12px;border-radius:50%;background:#f5222d"></div>
<div class="t" style="left:1726px;top:571px;color:#595959;font-size:14px;font-weight:400;">Disabled</div>
<div class="abs" style="left:267px;top:606px;width:1625px;height:49px;background:#fff;border-bottom:1px solid #ebebeb"></div>
<div class="abs" style="left:275px;top:622px;width:16px;height:16px;border:1px solid #d9d9d9;border-radius:4px;background:#fff"></div>
<div class="t" style="left:307px;top:618px;color:#0088ff;font-size:14px;font-weight:400;letter-spacing:0.2px">ROOT-361</div>
<div class="abs" style="left:432px;top:617px;width:24px;height:24px;border-radius:50%;box-shadow:0 2px 0 rgba(0,0,0,.018)"></div>
<svg style="left:442px;top:625px" width="3" height="10" viewBox="0 0 3 10"><rect x="0.6" y="0" width="1.7" height="1.7" fill="#434343"/><rect x="0.6" y="4.1" width="1.7" height="1.7" fill="#434343"/><rect x="0.6" y="8.2" width="1.7" height="1.7" fill="#434343"/></svg>
<div class="abs" style="left:471px;top:623px;width:12px;height:12px;border-radius:50%;background:#2ebd2e"></div>
<div class="t" style="left:491px;top:619px;color:#595959;font-size:14px;font-weight:400;">Ready</div>
<div class="t" style="left:615px;top:619px;color:#595959;font-size:14px;font-weight:400;letter-spacing:0.3px">100.00 GiB</div>
<div class="t" style="left:748px;top:619px;color:#595959;font-size:14px;font-weight:400;">ROOT</div>
<div class="t" style="left:831px;top:619px;color:#0088ff;font-size:14px;font-weight:400;letter-spacing:0.35px">FIO-TEST-2-2</div>
<div class="t" style="left:1025px;top:619px;color:#0088ff;font-size:14px;font-weight:400;letter-spacing:0.15px">Primary-Glue</div>
<div class="t" style="left:1176px;top:619px;color:#0088ff;font-size:14px;font-weight:400;">admin</div>
<div class="t" style="left:1259px;top:619px;color:#0088ff;font-size:14px;font-weight:400;letter-spacing:-0.3px">ABLESTACK-PoC</div>
<div class="t" style="left:1447px;top:619px;color:#595959;font-size:14px;font-weight:400;letter-spacing:0.37px">92.71 GiB</div>
<div class="abs" style="left:1703px;top:623px;width:12px;height:12px;border-radius:50%;background:#f5222d"></div>
<div class="t" style="left:1726px;top:620px;color:#595959;font-size:14px;font-weight:400;">Disabled</div>
<div class="abs" style="left:267px;top:655px;width:1625px;height:49px;background:#f9f9f9;border-bottom:1px solid #ebebeb"></div>
<div class="abs" style="left:275px;top:671px;width:16px;height:16px;border:1px solid #d9d9d9;border-radius:4px;background:#fff"></div>
<div class="t" style="left:307px;top:667px;color:#0088ff;font-size:14px;font-weight:400;letter-spacing:0.2px">ROOT-362</div>
<div class="abs" style="left:432px;top:666px;width:24px;height:24px;border-radius:50%;box-shadow:0 2px 0 rgba(0,0,0,.018)"></div>
<svg style="left:442px;top:674px" width="3" height="10" viewBox="0 0 3 10"><rect x="0.6" y="0" width="1.7" height="1.7" fill="#434343"/><rect x="0.6" y="4.1" width="1.7" height="1.7" fill="#434343"/><rect x="0.6" y="8.2" width="1.7" height="1.7" fill="#434343"/></svg>
<div class="abs" style="left:471px;top:672px;width:12px;height:12px;border-radius:50%;background:#2ebd2e"></div>
<div class="t" style="left:491px;top:668px;color:#595959;font-size:14px;font-weight:400;">Ready</div>
<div class="t" style="left:615px;top:668px;color:#595959;font-size:14px;font-weight:400;letter-spacing:0.3px">100.00 GiB</div>
<div class="t" style="left:748px;top:668px;color:#595959;font-size:14px;font-weight:400;">ROOT</div>
<div class="t" style="left:831px;top:668px;color:#0088ff;font-size:14px;font-weight:400;letter-spacing:0.35px">FIO-TEST-2-3</div>
<div class="t" style="left:1025px;top:668px;color:#0088ff;font-size:14px;font-weight:400;letter-spacing:0.15px">Primary-Glue</div>
<div class="t" style="left:1176px;top:668px;color:#0088ff;font-size:14px;font-weight:400;">admin</div>
<div class="t" style="left:1259px;top:668px;color:#0088ff;font-size:14px;font-weight:400;letter-spacing:-0.3px">ABLESTACK-PoC</div>
<div class="t" style="left:1447px;top:668px;color:#595959;font-size:14px;font-weight:400;letter-spacing:0.37px">92.71 GiB</div>
<div class="abs" style="left:1703px;top:672px;width:12px;height:12px;border-radius:50%;background:#f5222d"></div>
<div class="t" style="left:1726px;top:669px;color:#595959;font-size:14px;font-weight:400;">Disabled</div>
<div class="abs" style="left:267px;top:704px;width:1625px;height:49px;background:#fff;border-bottom:1px solid #ebebeb"></div>
<div class="abs" style="left:275px;top:720px;width:16px;height:16px;border:1px solid #d9d9d9;border-radius:4px;background:#fff"></div>
<div class="t" style="left:307px;top:716px;color:#0088ff;font-size:14px;font-weight:400;letter-spacing:0.2px">ROOT-363</div>
<div class="abs" style="left:432px;top:715px;width:24px;height:24px;border-radius:50%;box-shadow:0 2px 0 rgba(0,0,0,.018)"></div>
<svg style="left:442px;top:723px" width="3" height="10" viewBox="0 0 3 10"><rect x="0.6" y="0" width="1.7" height="1.7" fill="#434343"/><rect x="0.6" y="4.1" width="1.7" height="1.7" fill="#434343"/><rect x="0.6" y="8.2" width="1.7" height="1.7" fill="#434343"/></svg>
<div class="abs" style="left:471px;top:721px;width:12px;height:12px;border-radius:50%;background:#2ebd2e"></div>
<div class="t" style="left:491px;top:717px;color:#595959;font-size:14px;font-weight:400;">Ready</div>
<div class="t" style="left:615px;top:717px;color:#595959;font-size:14px;font-weight:400;letter-spacing:0.3px">100.00 GiB</div>
<div class="t" style="left:748px;top:717px;color:#595959;font-size:14px;font-weight:400;">ROOT</div>
<div class="t" style="left:831px;top:717px;color:#0088ff;font-size:14px;font-weight:400;letter-spacing:0.35px">FIO-TEST-3-1</div>
<div class="t" style="left:1025px;top:717px;color:#0088ff;font-size:14px;font-weight:400;letter-spacing:0.15px">Primary-Glue</div>
<div class="t" style="left:1176px;top:717px;color:#0088ff;font-size:14px;font-weight:400;">admin</div>
<div class="t" style="left:1259px;top:717px;color:#0088ff;font-size:14px;font-weight:400;letter-spacing:-0.3px">ABLESTACK-PoC</div>
<div class="t" style="left:1447px;top:717px;color:#595959;font-size:14px;font-weight:400;letter-spacing:0.37px">92.71 GiB</div>
<div class="abs" style="left:1703px;top:721px;width:12px;height:12px;border-radius:50%;background:#f5222d"></div>
<div class="t" style="left:1726px;top:718px;color:#595959;font-size:14px;font-weight:400;">Disabled</div>
<div class="abs" style="left:267px;top:753px;width:1625px;height:49px;background:#f9f9f9;border-bottom:1px solid #ebebeb"></div>
<div class="abs" style="left:275px;top:769px;width:16px;height:16px;border:1px solid #d9d9d9;border-radius:4px;background:#fff"></div>
<div class="t" style="left:307px;top:765px;color:#0088ff;font-size:14px;font-weight:400;letter-spacing:0.2px">ROOT-364</div>
<div class="abs" style="left:432px;top:764px;width:24px;height:24px;border-radius:50%;box-shadow:0 2px 0 rgba(0,0,0,.018)"></div>
<svg style="left:442px;top:772px" width="3" height="10" viewBox="0 0 3 10"><rect x="0.6" y="0" width="1.7" height="1.7" fill="#434343"/><rect x="0.6" y="4.1" width="1.7" height="1.7" fill="#434343"/><rect x="0.6" y="8.2" width="1.7" height="1.7" fill="#434343"/></svg>
<div class="abs" style="left:471px;top:770px;width:12px;height:12px;border-radius:50%;background:#2ebd2e"></div>
<div class="t" style="left:491px;top:766px;color:#595959;font-size:14px;font-weight:400;">Ready</div>
<div class="t" style="left:615px;top:766px;color:#595959;font-size:14px;font-weight:400;letter-spacing:0.3px">100.00 GiB</div>
<div class="t" style="left:748px;top:766px;color:#595959;font-size:14px;font-weight:400;">ROOT</div>
<div class="t" style="left:831px;top:766px;color:#0088ff;font-size:14px;font-weight:400;letter-spacing:0.35px">FIO-TEST-3-2</div>
<div class="t" style="left:1025px;top:766px;color:#0088ff;font-size:14px;font-weight:400;letter-spacing:0.15px">Primary-Glue</div>
<div class="t" style="left:1176px;top:766px;color:#0088ff;font-size:14px;font-weight:400;">admin</div>
<div class="t" style="left:1259px;top:766px;color:#0088ff;font-size:14px;font-weight:400;letter-spacing:-0.3px">ABLESTACK-PoC</div>
<div class="t" style="left:1447px;top:766px;color:#595959;font-size:14px;font-weight:400;letter-spacing:0.37px">92.71 GiB</div>
<div class="abs" style="left:1703px;top:770px;width:12px;height:12px;border-radius:50%;background:#f5222d"></div>
<div class="t" style="left:1726px;top:767px;color:#595959;font-size:14px;font-weight:400;">Disabled</div>
<div class="abs" style="left:267px;top:802px;width:1625px;height:49px;background:#fff;border-bottom:1px solid #ebebeb"></div>
<div class="abs" style="left:275px;top:818px;width:16px;height:16px;border:1px solid #d9d9d9;border-radius:4px;background:#fff"></div>
<div class="t" style="left:307px;top:814px;color:#0088ff;font-size:14px;font-weight:400;letter-spacing:0.2px">ROOT-365</div>
<div class="abs" style="left:432px;top:813px;width:24px;height:24px;border-radius:50%;box-shadow:0 2px 0 rgba(0,0,0,.018)"></div>
<svg style="left:442px;top:821px" width="3" height="10" viewBox="0 0 3 10"><rect x="0.6" y="0" width="1.7" height="1.7" fill="#434343"/><rect x="0.6" y="4.1" width="1.7" height="1.7" fill="#434343"/><rect x="0.6" y="8.2" width="1.7" height="1.7" fill="#434343"/></svg>
<div class="abs" style="left:471px;top:819px;width:12px;height:12px;border-radius:50%;background:#2ebd2e"></div>
<div class="t" style="left:491px;top:815px;color:#595959;font-size:14px;font-weight:400;">Ready</div>
<div class="t" style="left:615px;top:815px;color:#595959;font-size:14px;font-weight:400;letter-spacing:0.3px">100.00 GiB</div>
<div class="t" style="left:748px;top:815px;color:#595959;font-size:14px;font-weight:400;">ROOT</div>
<div class="t" style="left:831px;top:815px;color:#0088ff;font-size:14px;font-weight:400;letter-spacing:0.35px">FIO-TEST-3-3</div>
<div class="t" style="left:1025px;top:815px;color:#0088ff;font-size:14px;font-weight:400;letter-spacing:0.15px">Primary-Glue</div>
<div class="t" style="left:1176px;top:815px;color:#0088ff;font-size:14px;font-weight:400;">admin</div>
<div class="t" style="left:1259px;top:815px;color:#0088ff;font-size:14px;font-weight:400;letter-spacing:-0.3px">ABLESTACK-PoC</div>
<div class="t" style="left:1447px;top:815px;color:#595959;font-size:14px;font-weight:400;letter-spacing:0.37px">92.71 GiB</div>
<div class="abs" style="left:1703px;top:819px;width:12px;height:12px;border-radius:50%;background:#f5222d"></div>
<div class="t" style="left:1726px;top:816px;color:#595959;font-size:14px;font-weight:400;">Disabled</div>
<div class="abs" style="left:267px;top:851px;width:1625px;height:49px;background:#f9f9f9;border-bottom:1px solid #ebebeb"></div>
<div class="abs" style="left:275px;top:867px;width:16px;height:16px;border:1px solid #d9d9d9;border-radius:4px;background:#fff"></div>
<div class="t" style="left:307px;top:863px;color:#0088ff;font-size:14px;font-weight:400;letter-spacing:0.2px">ROOT-368</div>
<div class="abs" style="left:432px;top:862px;width:24px;height:24px;border-radius:50%;box-shadow:0 2px 0 rgba(0,0,0,.018)"></div>
<svg style="left:442px;top:870px" width="3" height="10" viewBox="0 0 3 10"><rect x="0.6" y="0" width="1.7" height="1.7" fill="#434343"/><rect x="0.6" y="4.1" width="1.7" height="1.7" fill="#434343"/><rect x="0.6" y="8.2" width="1.7" height="1.7" fill="#434343"/></svg>
<div class="abs" style="left:471px;top:868px;width:12px;height:12px;border-radius:50%;background:#2ebd2e"></div>
<div class="t" style="left:491px;top:864px;color:#595959;font-size:14px;font-weight:400;">Ready</div>
<div class="t" style="left:615px;top:864px;color:#595959;font-size:14px;font-weight:400;letter-spacing:0.3px">100.00 GiB</div>
<div class="t" style="left:748px;top:864px;color:#595959;font-size:14px;font-weight:400;">ROOT</div>
<div class="t" style="left:831px;top:864px;color:#0088ff;font-size:14px;font-weight:400;letter-spacing:0.35px">FIO-TEST-1-1-1</div>
<div class="t" style="left:1025px;top:864px;color:#0088ff;font-size:14px;font-weight:400;letter-spacing:0.15px">Primary-Glue</div>
<div class="t" style="left:1176px;top:864px;color:#0088ff;font-size:14px;font-weight:400;">admin</div>
<div class="t" style="left:1259px;top:864px;color:#0088ff;font-size:14px;font-weight:400;letter-spacing:-0.3px">ABLESTACK-PoC</div>
<div class="t" style="left:1447px;top:864px;color:#595959;font-size:14px;font-weight:400;letter-spacing:0.37px">92.71 GiB</div>
<div class="abs" style="left:1703px;top:868px;width:12px;height:12px;border-radius:50%;background:#f5222d"></div>
<div class="t" style="left:1726px;top:865px;color:#595959;font-size:14px;font-weight:400;">Disabled</div>
<div class="abs" style="left:267px;top:900px;width:1625px;height:49px;background:#fff;border-bottom:1px solid #ebebeb"></div>
<div class="abs" style="left:275px;top:916px;width:16px;height:16px;border:1px solid #d9d9d9;border-radius:4px;background:#fff"></div>
<div class="t" style="left:307px;top:912px;color:#0088ff;font-size:14px;font-weight:400;letter-spacing:0.2px">ROOT-369</div>
<div class="abs" style="left:432px;top:911px;width:24px;height:24px;border-radius:50%;box-shadow:0 2px 0 rgba(0,0,0,.018)"></div>
<svg style="left:442px;top:919px" width="3" height="10" viewBox="0 0 3 10"><rect x="0.6" y="0" width="1.7" height="1.7" fill="#434343"/><rect x="0.6" y="4.1" width="1.7" height="1.7" fill="#434343"/><rect x="0.6" y="8.2" width="1.7" height="1.7" fill="#434343"/></svg>
<div class="abs" style="left:471px;top:917px;width:12px;height:12px;border-radius:50%;background:#2ebd2e"></div>
<div class="t" style="left:491px;top:913px;color:#595959;font-size:14px;font-weight:400;">Ready</div>
<div class="t" style="left:615px;top:913px;color:#595959;font-size:14px;font-weight:400;letter-spacing:0.3px">100.00 GiB</div>
<div class="t" style="left:748px;top:913px;color:#595959;font-size:14px;font-weight:400;">ROOT</div>
<div class="t" style="left:831px;top:913px;color:#0088ff;font-size:14px;font-weight:400;letter-spacing:0.35px">FIO-TEST-2-2-2</div>
<div class="t" style="left:1025px;top:913px;color:#0088ff;font-size:14px;font-weight:400;letter-spacing:0.15px">Primary-Glue</div>
<div class="t" style="left:1176px;top:913px;color:#0088ff;font-size:14px;font-weight:400;">admin</div>
<div class="t" style="left:1259px;top:913px;color:#0088ff;font-size:14px;font-weight:400;letter-spacing:-0.3px">ABLESTACK-PoC</div>
<div class="t" style="left:1447px;top:913px;color:#595959;font-size:14px;font-weight:400;letter-spacing:0.37px">92.71 GiB</div>
<div class="abs" style="left:1703px;top:917px;width:12px;height:12px;border-radius:50%;background:#f5222d"></div>
<div class="t" style="left:1726px;top:914px;color:#595959;font-size:14px;font-weight:400;">Disabled</div>
<div class="abs" style="left:267px;top:949px;width:1625px;height:49px;background:#f9f9f9;border-bottom:1px solid #ebebeb"></div>
<div class="abs" style="left:275px;top:965px;width:16px;height:16px;border:1px solid #d9d9d9;border-radius:4px;background:#fff"></div>
<div class="t" style="left:307px;top:961px;color:#0088ff;font-size:14px;font-weight:400;letter-spacing:0.2px">ROOT-370</div>
<div class="abs" style="left:432px;top:960px;width:24px;height:24px;border-radius:50%;box-shadow:0 2px 0 rgba(0,0,0,.018)"></div>
<svg style="left:442px;top:968px" width="3" height="10" viewBox="0 0 3 10"><rect x="0.6" y="0" width="1.7" height="1.7" fill="#434343"/><rect x="0.6" y="4.1" width="1.7" height="1.7" fill="#434343"/><rect x="0.6" y="8.2" width="1.7" height="1.7" fill="#434343"/></svg>
<div class="abs" style="left:471px;top:966px;width:12px;height:12px;border-radius:50%;background:#2ebd2e"></div>
<div class="t" style="left:491px;top:962px;color:#595959;font-size:14px;font-weight:400;">Ready</div>
<div class="t" style="left:615px;top:962px;color:#595959;font-size:14px;font-weight:400;letter-spacing:0.3px">100.00 GiB</div>
<div class="t" style="left:748px;top:962px;color:#595959;font-size:14px;font-weight:400;">ROOT</div>
<div class="t" style="left:831px;top:962px;color:#0088ff;font-size:14px;font-weight:400;letter-spacing:0.35px">FIO-TEST-3-3-3</div>
<div class="t" style="left:1025px;top:962px;color:#0088ff;font-size:14px;font-weight:400;letter-spacing:0.15px">Primary-Glue</div>
<div class="t" style="left:1176px;top:962px;color:#0088ff;font-size:14px;font-weight:400;">admin</div>
<div class="t" style="left:1259px;top:962px;color:#0088ff;font-size:14px;font-weight:400;letter-spacing:-0.3px">ABLESTACK-PoC</div>
<div class="t" style="left:1447px;top:962px;color:#595959;font-size:14px;font-weight:400;letter-spacing:0.37px">92.71 GiB</div>
<div class="abs" style="left:1703px;top:966px;width:12px;height:12px;border-radius:50%;background:#f5222d"></div>
<div class="t" style="left:1726px;top:963px;color:#595959;font-size:14px;font-weight:400;">Disabled</div>
<div class="abs" style="left:1864px;top:883px;width:40px;height:40px;background:#a6a6a6;border-radius:5px 4px 0 5px"></div>
<svg style="left:1877px;top:896px" width="14" height="13" viewBox="0 0 14 13"><rect x="0.6" y="2" width="12.8" height="10.4" stroke="#fff" stroke-width="1" fill="none"/><path d="M3.5 0.5v3 M7 0.5v3 M10.5 0.5v3 M0.6 4.5h12.8 M3 7.5h3 M3 10h3 M8 9l1.3 1.3 2.4-2.6" stroke="#fff" stroke-width="1" fill="none"/></svg>
<div class="abs" style="left:1864px;top:923px;width:40px;height:40px;background:#0088ff;border-radius:5px 0 0 5px"></div>
<svg style="left:1876px;top:934px" width="16" height="16" viewBox="0 0 18 18"><path d="M7.6 1.5h2.8l.5 2.2 1.6.9 2.1-.7 1.4 2.4-1.7 1.5v1.8l1.7 1.5-1.4 2.4-2.1-.7-1.6.9-.5 2.2H7.6l-.5-2.2-1.6-.9-2.1.7-1.4-2.4 1.7-1.5V8.2L2 6.7l1.4-2.4 2.1.7 1.6-.9z" stroke="#fff" stroke-width="1.4" fill="none"/><circle cx="9" cy="9" r="2.6" stroke="#fff" stroke-width="1.4" fill="none"/></svg>
<div class="abs" style="left:1905px;top:0;width:14px;height:968px;background:#f8f8f8;border-left:1px solid #ededed"></div>
<div class="abs" style="left:1908px;top:3px;width:8px;height:709px;border-radius:4px;background:#c1c1c1"></div>
<svg style="left:0;top:956px" width="12" height="12" viewBox="0 0 12 12"><path d="M0 0 A12 12 0 0 0 12 12 H0z" fill="#0b160d"/></svg>
<svg style="left:1907px;top:956px" width="12" height="12" viewBox="0 0 12 12"><path d="M12 0 A12 12 0 0 1 0 12 H12z" fill="#0b160d"/></svg>
</body></html>
